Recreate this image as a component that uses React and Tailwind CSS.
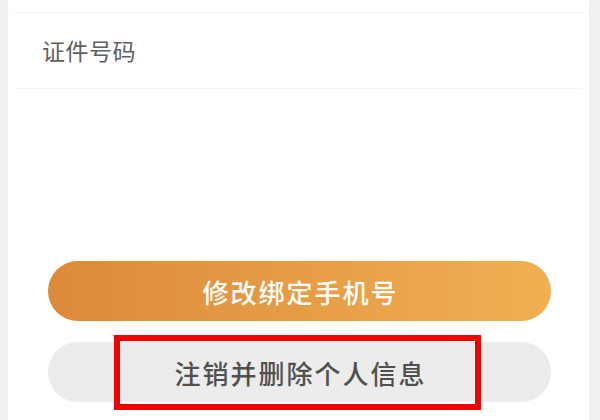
import React from 'react';

const cjk = { fontFamily: '"Noto Sans CJK SC", "Noto Sans", sans-serif' };

const App = () => {
    return (
        <div className="flex h-[420px] w-[600px] overflow-hidden bg-[#f0f0f0] pl-[8px] pr-[11px]" style={cjk}>
            <div className="flex flex-1 flex-col bg-white">
                <div className="h-[12px]"></div>
                <div className="mx-[4px] h-px bg-[#f4f4f4]"></div>
                <div className="flex h-[75px] items-center pl-[34px] text-[23px] tracking-[0.5px] text-[#606060]">
                    证件号码
                </div>
                <div className="mx-[7px] h-px bg-[#f4f4f4]"></div>

                <div className="ml-[40px] mt-[172px] flex h-[60px] w-[503px] items-center justify-center rounded-full bg-gradient-to-r from-[#dd893a] to-[#f0b052] pl-[2px] text-[26px] font-medium tracking-[2px] text-white">
                    修改绑定手机号
                </div>

                <div className="relative ml-[40px] mt-[21px] flex h-[60px] w-[503px] items-center justify-center rounded-full bg-[#ececec] pl-[2px] text-[26px] font-medium tracking-[2px] text-[#505050]">
                    注销并删除个人信息
                    <div className="absolute left-[66px] top-[-7px] h-[75px] w-[367px] border-[6px] border-[#f50000]"></div>
                </div>
            </div>
        </div>
    );
};

export default App;
